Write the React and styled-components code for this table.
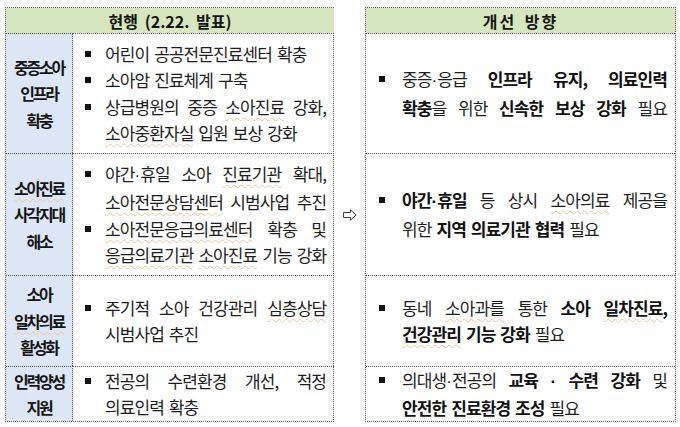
import React from 'react'
import styled, { createGlobalStyle } from 'styled-components'

const GlobalStyle = createGlobalStyle`
  body {
    margin: 0;
    background: #ffffff;
    font-family: "Noto Sans CJK KR", "Noto Sans", sans-serif;
    color: #1e1e1e;
  }
`

const ROWS = '25px 120px 122px 91px 55px'
const BORDER = '1px dotted #5a5a5a'

const Page = styled.div`
  display: flex;
  align-items: stretch;
  padding: 7px 0 0 5px;
`

const Table = styled.div`
  box-sizing: border-box;
  width: ${props => props.$width}px;
  display: grid;
  grid-template-columns: ${props => props.$cols};
  grid-template-rows: ${ROWS};
  border: ${BORDER};
`

const HeaderCell = styled.div`
  grid-column: 1 / -1;
  display: flex;
  align-items: center;
  justify-content: center;
  background: #d6e7bf;
  font-size: 16px;
  font-weight: 700;
  letter-spacing: ${props => props.$spread ? '2px' : '0'};
  word-spacing: 3px;
  color: #151515;
  padding-top: 1px;
`

const LabelCell = styled.div`
  box-sizing: border-box;
  display: flex;
  flex-direction: column;
  align-items: center;
  justify-content: center;
  background: #dde6f4;
  border-top: ${BORDER};
  border-right: ${BORDER};
  font-size: 16px;
  font-weight: 700;
  letter-spacing: -2.2px;
  line-height: 26.5px;
  color: #151515;
`

const BodyCell = styled.div`
  box-sizing: border-box;
  display: flex;
  flex-direction: column;
  justify-content: center;
  border-top: ${BORDER};
  padding: 0 8px 0 ${props => props.$inset}px;
`

const Item = styled.div`
  display: flex;
  align-items: flex-start;
`

const BulletBox = styled.span`
  flex: none;
  width: ${props => props.$width}px;
  height: 26.5px;
  display: flex;
  align-items: center;
  &::before {
    content: '';
    width: 6px;
    height: 6px;
    background: #111111;
  }
`

const Lines = styled.div`
  flex: 1;
  font-size: 17px;
  letter-spacing: -0.9px;
  line-height: 26.5px;
  word-spacing: 2px;
`

const Line = styled.span`
  display: block;
  white-space: nowrap;
  text-align: ${props => props.$justify ? 'justify' : 'left'};
  text-align-last: ${props => props.$justify ? 'justify' : 'left'};
`

const Bold = styled.span`
  font-weight: 700;
  color: #111111;
`

const Wavy = styled.span`
  text-decoration: underline wavy #efc49a;
  text-decoration-thickness: 1px;
  text-underline-offset: 3px;
`

// the middle dot is narrow in the original, not full width
const Dot = styled.span`
  font-family: "Liberation Sans", sans-serif;
  letter-spacing: 0;
`

const ArrowColumn = styled.div`
  width: 30px;
  display: flex;
  align-items: center;
  justify-content: center;
  padding-left: 1px;
`

function Arrow() {
  return (
    <svg width="14" height="12" viewBox="0 0 14 12">
      <path d="M0.5 3.5 H7.5 V0.8 L13 6 L7.5 11.2 V8.5 H0.5 Z" fill="none" stroke="#444" strokeWidth="1" />
    </svg>
  )
}

function renderDots(text, key) {
  return text.split(/(·)/).filter(Boolean).map((part, i) =>
    part === '·' ? <Dot key={key + '.' + i}>·</Dot> : <React.Fragment key={key + '.' + i}>{part}</React.Fragment>
  )
}

// "**bold**" and "~~spell-check squiggle~~"
function renderWavy(text, key) {
  return text.split(/(~~[^~]+~~)/).filter(Boolean).map((part, i) =>
    part.startsWith('~~')
      ? <Wavy key={key + '-' + i}>{part.slice(2, -2)}</Wavy>
      : <React.Fragment key={key + '-' + i}>{renderDots(part, key + '-' + i)}</React.Fragment>
  )
}

function Rich({ text }) {
  return text.split(/(\*\*[^*]+\*\*)/).filter(Boolean).map((part, i) =>
    part.startsWith('**')
      ? <Bold key={i}>{renderWavy(part.slice(2, -2), 'b' + i)}</Bold>
      : <React.Fragment key={i}>{renderWavy(part, 'n' + i)}</React.Fragment>
  )
}

// a line that starts with "|" is justified to the full width
function Bullet({ lines, bulletWidth }) {
  return (
    <Item>
      <BulletBox $width={bulletWidth} />
      <Lines>
        {lines.map((l, i) => (
          <Line key={i} $justify={l.startsWith('|')}>
            <Rich text={l.replace(/^\|/, '')} />
          </Line>
        ))}
      </Lines>
    </Item>
  )
}

const rows = [
  {
    label: ['중증소아', '인프라', '확충'],
    now: [
      ['어린이 공공전문진료센터 확충'],
      ['소아암 진료체계 구축'],
      ['|상급병원의 중증 ~~소아진료~~ 강화,', '~~소아중환자실~~ 입원 보상 강화'],
    ],
    next: [['|중증·응급 **인프라 유지, 의료인력**', '|**확충**을 위한 **신속한 보상 강화** 필요']],
  },
  {
    label: ['~~소아진료~~', '사각지대', '해소'],
    now: [
      ['|야간·휴일 소아 ~~진료기관~~ 확대,', '|~~소아전문상담센터~~ 시범사업 추진'],
      ['|~~소아전문응급의료센터~~ 확충 및', '|~~응급의료기관~~ ~~소아진료~~ 기능 강화'],
    ],
    next: [['|**야간·휴일** 등 상시 ~~소아의료~~ 제공을', '위한 **지역 의료기관 협력** 필요']],
  },
  {
    label: ['소아', '~~일차의료~~', '활성화'],
    now: [['|주기적 소아 건강관리 ~~심층상담~~', '시범사업 추진']],
    next: [['|동네 ~~소아과를~~ 통한 **소아 ~~일차진료~~,**', '**~~건강관리~~ 기능 강화** 필요']],
  },
  {
    label: ['인력양성', '지원'],
    now: [['|전공의 수련환경 개선, 적정', '의료인력 확충']],
    next: [['|의대생·전공의 **교육 · 수련 강화** 및', '**안전한 진료환경 조성** 필요']],
  },
]

export default function App() {
  return (
    <>
      <GlobalStyle />
      <Page>
        <Table $width={329} $cols="67px 1fr">
          <HeaderCell>현행 (2.22. 발표)</HeaderCell>
          {rows.map((row, i) => (
            <React.Fragment key={i}>
              <LabelCell>
                {row.label.map((t, j) => <span key={j}><Rich text={t} /></span>)}
              </LabelCell>
              <BodyCell $inset={12}>
                {row.now.map((lines, j) => <Bullet key={j} lines={lines} bulletWidth={20} />)}
              </BodyCell>
            </React.Fragment>
          ))}
        </Table>
        <ArrowColumn>
          <Arrow />
        </ArrowColumn>
        <Table $width={311} $cols="1fr">
          <HeaderCell $spread>개선 방향</HeaderCell>
          {rows.map((row, i) => (
            <BodyCell key={i} $inset={13}>
              {row.next.map((lines, j) => <Bullet key={j} lines={lines} bulletWidth={23} />)}
            </BodyCell>
          ))}
        </Table>
      </Page>
    </>
  )
}
